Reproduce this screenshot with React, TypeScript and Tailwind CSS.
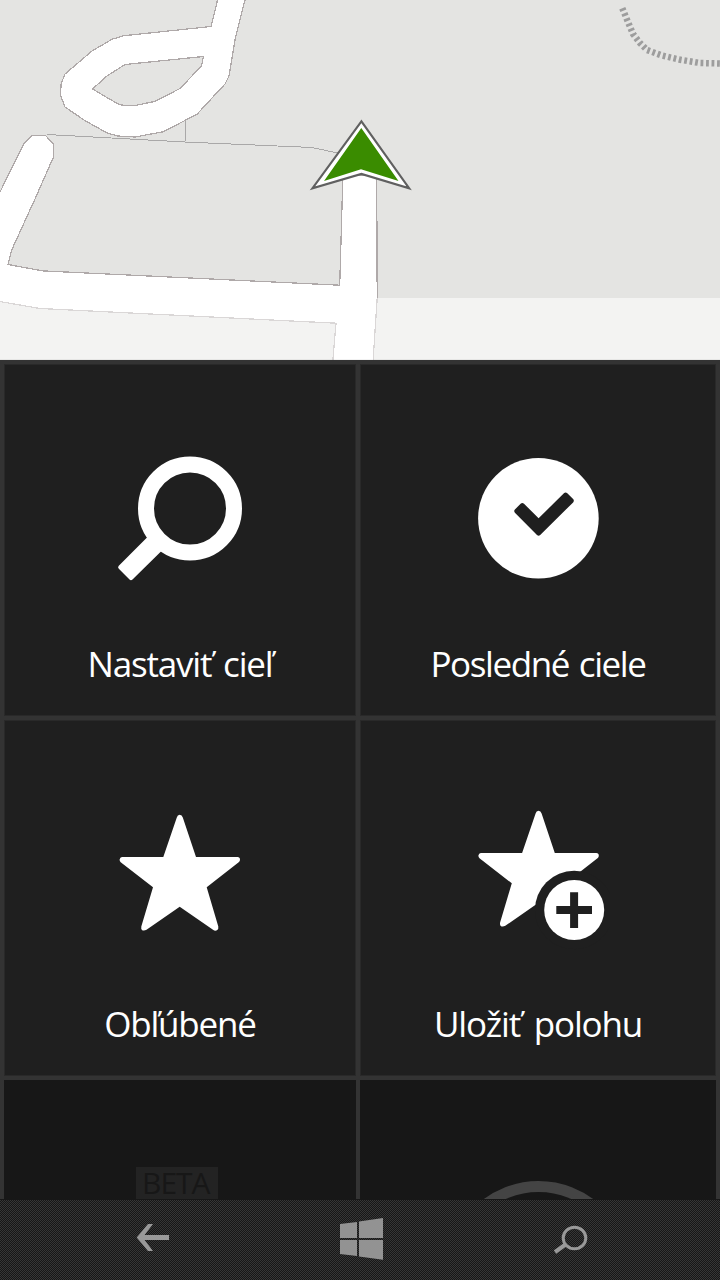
import type { ReactNode } from "react";

const STAR_PATH =
	"M68.8 9.5Q69.5 6.8 71.7 6.8Q74 6.8 74.8 9.5L88 49H129.5Q132 49 132 51.5Q132 53 131 54L98.7 79.3L110.3 118.5Q110.8 121 109 122.3Q107 123.2 105 121.8L71.7 98.7L38.5 121.8Q36 123.2 34.2 122.2Q32.8 121 33.3 118.5L45 79.3L12.7 54.2Q11.5 53 11.6 51.5Q12 49 14 49H55.3Z";

function MapView() {
	return (
		<svg className="block h-[360px] w-full bg-[#e4e4e2]" viewBox="0 0 720 360">
			<g fill="none" stroke="#a9a8a8" strokeWidth="1" shapeRendering="crispEdges">
				<path d="M47 134.5L185 142L312 147.5L340 153.5" />
				<path d="M186 118L185 142" />
			</g>
			<g fill="#ffffff" stroke="#afa9a9" strokeWidth="1.25" shapeRendering="crispEdges">
				<path
					fillRule="evenodd"
					d="M218 -2L211 26.5L123 35.8L112 39.3L92 51L65 74L61 84L60.7 96L65 107L84 120L107 133L118 136L135 137L163 131.8L197 114.3L225 84L229 76L235 40L245.5 -2ZM203.5 56.5L201.5 66L180 88.5L154.5 101.5L135 105.5L124 105.5L118 104L92.5 89L107 76L125 64.5Z"
				/>
				<path d="M-2 196L24 143.5L32 135.5H45.5L53.5 144V157L35 199L11.7 250L8 264.5L43 270.9L339.7 285.2L342.9 175H376.7L377.2 298L373 362H332.7L336 323.2L40 308.5L-2 301.2Z" />
			</g>
			<path
				d="M622.3 8.2L628 22L633 34L640 43L647 50L662 55.5L679 59.5L700 63L722 63.5"
				fill="none"
				stroke="#9d9d9d"
				strokeWidth="6.5"
				strokeDasharray="2.8 2.7"
			/>
			<rect y="298" width="720" height="62" fill="#ffffff" fillOpacity="0.54" />
			<rect y="359" width="720" height="1" fill="#000000" fillOpacity="0.05" />
			<path
				d="M361.4 121.3L312.4 188.3L361.4 173.9L409.2 188.3Z"
				fill="#ffffff"
				stroke="#606060"
				strokeWidth="2.1"
			/>
			<path d="M361.3 128L324 181L361 169.3L398.5 181Z" fill="#3a8c00" />
		</svg>
	);
}

function SearchIcon() {
	return (
		<svg className="h-36 w-36" viewBox="0 0 144 144">
			<circle cx="82" cy="60.5" r="44" fill="none" stroke="#fff" strokeWidth="16" />
			<path
				d="M42 86.5L10.8 117.7Q9.3 119.2 10.8 120.7L21.5 131.6Q23 133 24.5 131.5L56 100.4Z"
				fill="#fff"
			/>
		</svg>
	);
}

function RecentIcon() {
	return (
		<svg className="h-36 w-36" viewBox="0 0 144 144">
			<circle cx="72.4" cy="70.3" r="60.3" fill="#fff" />
			<path
				d="M72.6 70.3L58 55.7Q56.3 54.2 54.6 55.7L48.9 61.4Q47.5 63.1 48.9 64.8L71 87Q72.6 88.6 74.2 87L107.1 54.4Q108.6 52.7 107.1 51L101.3 45.2Q99.6 43.8 97.9 45.2Z"
				fill="#1f1f1f"
			/>
		</svg>
	);
}

function StarIcon() {
	return (
		<svg className="h-36 w-36" viewBox="0 0 144 144">
			<path d={STAR_PATH} fill="#fff" />
		</svg>
	);
}

function StarAddIcon() {
	return (
		<svg className="h-36 w-36" viewBox="0 0 144 144">
			<path d={STAR_PATH} transform="translate(0.8 -4)" fill="#fff" />
			<circle cx="108.2" cy="102" r="39.3" fill="#1f1f1f" />
			<circle cx="108.2" cy="102" r="30" fill="#fff" />
			<path d="M90.3 102.1H126M108.1 84.3V120" stroke="#1f1f1f" strokeWidth="8" />
		</svg>
	);
}

function Tile({ label, icon }: { label: ReactNode; icon: ReactNode }) {
	return (
		<button className="flex flex-col items-center justify-end border border-[#292929] bg-[#1f1f1f] pb-[27px]">
			{icon}
			<span className="mt-12 h-12 text-[35px] leading-[48px] tracking-[-1.2px] whitespace-nowrap text-white">
				{label}
			</span>
		</button>
	);
}

function NavBar() {
	return (
		<nav className="flex h-[81px] items-center justify-between border-t border-[#171717] bg-[#363636] bg-[conic-gradient(#171717_25%,transparent_0_50%,#171717_0_75%,transparent_0)] bg-[length:2px_2px] pr-[132px] pb-1 pl-[136px]">
			<svg className="h-11 w-[33px]" viewBox="136 1216 33 44">
				<path
					d="M136.7 1237.5L148 1224H153L144.6 1235H169V1240H144.6L153 1251H148Z"
					fill="#999"
				/>
			</svg>
			<svg className="h-11 w-[43px]" viewBox="340 1216 43 44">
				<path
					d="M340 1224L357 1222V1238H340ZM359 1221.5L383 1218V1238H359ZM340 1240H357V1256L340 1254ZM359 1240H383V1259.8L359 1256.5Z"
					fill="#999"
					fillOpacity="0.95"
				/>
			</svg>
			<svg className="h-11 w-[34px]" viewBox="554 1216 34 44">
				<ellipse cx="574.5" cy="1238" rx="11.3" ry="10.8" fill="none" stroke="#999" strokeWidth="3" />
				<path d="M565.5 1244.5L555 1252" stroke="#999" strokeWidth="4" />
			</svg>
		</nav>
	);
}

export default function App() {
	return (
		<div className="flex h-[1280px] w-[720px] flex-col overflow-hidden bg-[#333333] font-['Open_Sans','Noto_Sans',sans-serif]">
			<MapView />
			<main className="grid h-[839px] grid-cols-[352px_356px] grid-rows-[352px_356px_119px] gap-1 pt-1 pl-1">
				<Tile label={<span className="[word-spacing:4px]">Nastaviť cieľ</span>} icon={<SearchIcon />} />
				<Tile
					label={<span className="tracking-[-1.4px] [word-spacing:2px]">Posledné ciele</span>}
					icon={<RecentIcon />}
				/>
				<Tile label="Obľúbené" icon={<StarIcon />} />
				<Tile label={<span className="[word-spacing:6px]">Uložiť polohu</span>} icon={<StarAddIcon />} />
				<div className="bg-[#171717] pt-[87px] pl-[132px]">
					<span className="block h-8 w-[82px] bg-[#232323] pl-1.5 text-[30px] leading-8 tracking-[-1px] text-[#171717]">
						BETA
					</span>
				</div>
				<div className="flex justify-center overflow-hidden bg-[#171717] pt-[101px]">
					<svg className="h-[184px] w-[184px] shrink-0" viewBox="0 0 184 184">
						<circle cx="92.5" cy="92" r="86.5" fill="none" stroke="#444" strokeWidth="11" />
					</svg>
				</div>
			</main>
			<NavBar />
		</div>
	);
}
